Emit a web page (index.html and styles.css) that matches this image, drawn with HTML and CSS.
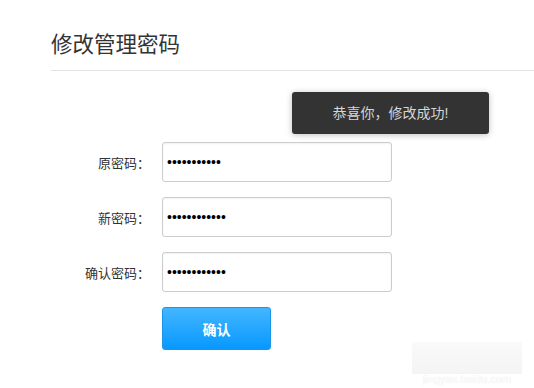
FILE: index.html
```html
<!DOCTYPE html>
<html lang="zh-CN">
<head>
    <meta charset="UTF-8">
    <title>修改管理密码</title>
    <link rel="stylesheet" href="styles.css">
</head>
<body>
    <div class="page">
        <h1 class="page-title">修改管理密码</h1>

        <form class="pwd-form">
            <label class="form-label" for="old">原密码：</label>
            <input class="form-input" id="old" type="password" value="12345678901">

            <label class="form-label" for="new">新密码：</label>
            <input class="form-input" id="new" type="password" value="123456789012">

            <label class="form-label" for="confirm">确认密码：</label>
            <input class="form-input" id="confirm" type="password" value="123456789012">

            <span></span>
            <button class="submit-button" type="button">确认</button>
        </form>

        <div class="toast">恭喜你，修改成功!</div>
    </div>

    <div class="watermark">jingyan.baidu.com</div>
</body>
</html>
```

FILE: styles.css
```css
* {
    margin: 0;
    padding: 0;
    box-sizing: border-box;
}

body {
    font-family: 'Liberation Sans', 'Noto Sans CJK SC', sans-serif;
    background-color: #fff;
    color: #333;
    width: 534px;
    height: 388px;
    overflow: hidden;
    position: relative;
}

.page {
    position: relative;
    padding: 31px 0 0 51px;
}

.page-title {
    font-size: 21.5px;
    font-weight: normal;
    line-height: 28px;
    color: #333;
    padding-bottom: 11px;
    border-bottom: 1px solid #e2e2e2;
}

.pwd-form {
    display: grid;
    grid-template-columns: 99px 230px;
    column-gap: 12px;
    row-gap: 15px;
    align-items: center;
    margin-top: 71px;
}

.form-label {
    font-size: 13px;
    color: #333;
    text-align: right;
}

.form-input {
    height: 40px;
    border: 1px solid #ccc;
    border-radius: 3px;
    padding: 0 4px;
    font-size: 14px;
    color: #000;
    box-shadow: inset 0 1px 2px rgba(0, 0, 0, 0.06);
    outline: none;
}

.submit-button {
    width: 109px;
    height: 43px;
    border: 1px solid #1a96e6;
    border-radius: 3px;
    background: linear-gradient(#43b6ff, #0898ff);
    color: #fff;
    font-family: 'Liberation Sans', 'Noto Sans CJK SC', sans-serif;
    font-size: 14px;
    font-weight: bold;
}

/* toast floats over the gap between title and form */
.toast {
    position: absolute;
    left: 292px;
    top: 92px;
    width: 197px;
    height: 42px;
    line-height: 42px;
    background-color: #333;
    border-radius: 3px;
    color: #d6d6d6;
    font-size: 14px;
    text-align: center;
    box-shadow: 0 1px 6px rgba(0, 0, 0, 0.25);
}

.watermark {
    position: absolute;
    left: 412px;
    top: 342px;
    width: 110px;
    height: 46px;
    padding-top: 31px;
    background: linear-gradient(#fafafa, #f4f4f4 70%, #fff 70%);
    color: #fff;
    font-size: 11px;
    text-shadow: 0 0 1px #ddd;
    text-align: center;
}
```
